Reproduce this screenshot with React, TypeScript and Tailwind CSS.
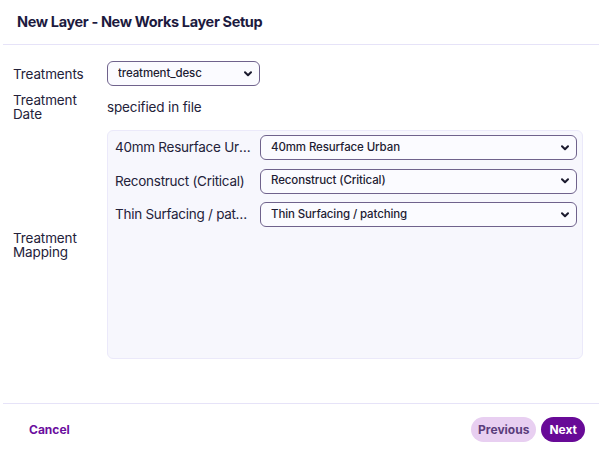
import { useState } from "react";

const font = { fontFamily: "Inter, 'Noto Sans', sans-serif" };

function Chevron() {
  return (
    <svg width="8" height="6" viewBox="0 0 8 6" className="pointer-events-none absolute right-[8px] top-1/2 -translate-y-1/2">
      <path d="M1 1.3 L4 4.3 L7 1.3" fill="none" stroke="#1b1a2e" strokeWidth="2" strokeLinecap="round" strokeLinejoin="round" />
    </svg>
  );
}

function Select({ value, options, className }: { value: string; options: string[]; className?: string }) {
  const [val, setVal] = useState(value);
  return (
    <div className={"relative " + (className ?? "")}>
      <select
        value={val}
        onChange={(e) => setVal(e.target.value)}
        className="block h-[25px] w-full appearance-none rounded-[6px] border border-[#6f628c] bg-[#fbfbff] pl-[10px] pr-6 text-[11.5px] font-medium tracking-[-0.01em] text-[#1e1c33] outline-none"
        style={font}
      >
        {options.map((o) => (
          <option key={o}>{o}</option>
        ))}
      </select>
      <Chevron />
    </div>
  );
}

const mappings = [
  { label: "40mm Resurface Urban", value: "40mm Resurface Urban" },
  { label: "Reconstruct (Critical)", value: "Reconstruct (Critical)" },
  { label: "Thin Surfacing / patching", value: "Thin Surfacing / patching" },
];

export default function App() {
  return (
    <div className="flex h-[459px] w-[602px] flex-col bg-white text-[#24223a]" style={font}>
      {/* Заголовок */}
      <div className="h-[44px] px-[17px] pt-[12px]">
        <h2 className="text-[14.5px] font-bold leading-[20px] tracking-[-0.025em] text-[#1c1a3e]">
          New Layer - New Works Layer Setup
        </h2>
      </div>
      <div className="ml-[3px] mr-[3px] border-t border-[#e6e3f8]" />

      {/* Тело формы */}
      <div className="flex-1 px-[13px] pt-[16px]">
        <div className="flex items-center">
          <label className="w-[94px] text-[13.5px] leading-[16px] tracking-[-0.01em]">Treatments</label>
          <Select value="treatment_desc" options={["treatment_desc"]} className="w-[153px]" />
        </div>

        <div className="mt-[7px] flex items-center">
          <label className="w-[94px] text-[13.5px] leading-[14px] tracking-[-0.01em]">
            Treatment
            <br />
            Date
          </label>
          <span className="text-[13.5px] tracking-[-0.01em]">specified in file</span>
        </div>

        <div className="mt-[9px] flex items-center">
          <label className="w-[94px] text-[13.5px] leading-[14px] tracking-[-0.01em]">
            Treatment
            <br />
            Mapping
          </label>
          <div className="flex h-[229px] w-[476px] flex-col gap-[8.5px] rounded-[6px] border border-[#ebe9fa] bg-[#f7f7fd] pl-[7px] pr-[5px] pt-[4px]">
            {mappings.map((m) => (
              <div key={m.label} className="flex items-center gap-[8px]">
                <span className="w-[137px] truncate text-[13.5px] tracking-[-0.02em]">{m.label}</span>
                <Select value={m.value} options={mappings.map((x) => x.value)} className="flex-1" />
              </div>
            ))}
          </div>
        </div>
      </div>

      {/* Подвал */}
      <div className="ml-[3px] mr-[3px] border-t border-[#e6e3f8]" />
      <div className="flex h-[55px] items-start justify-between pl-[29px] pr-[17px] pt-[13px]">
        <button className="h-[25px] text-[12px] font-bold text-[#6b0e9e]">Cancel</button>
        <div className="flex gap-[5px]">
          <button className="h-[25px] rounded-full bg-[#e8cff1] px-[7px] text-[12px] font-bold text-[#5a3d7b]">Previous</button>
          <button className="h-[25px] rounded-full bg-[#680a97] px-[8px] text-[12px] font-bold text-white">Next</button>
        </div>
      </div>
    </div>
  );
}
